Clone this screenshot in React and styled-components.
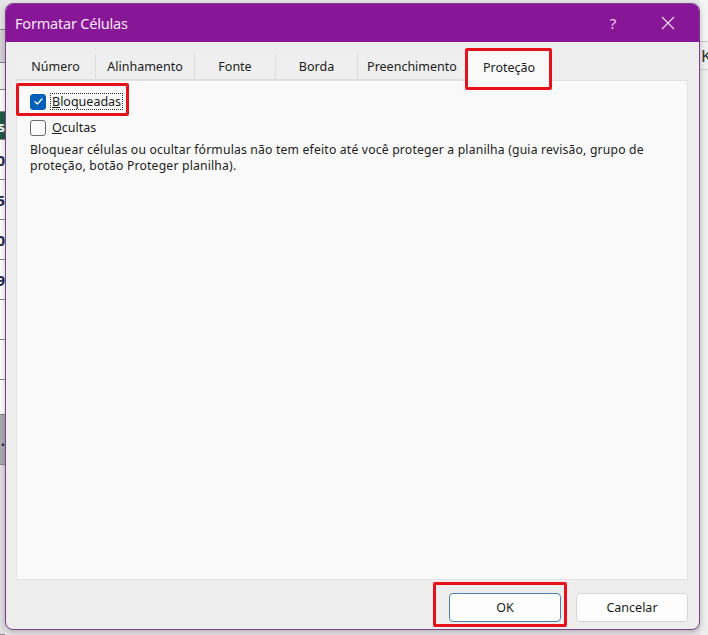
import React from 'react'
import styled, { createGlobalStyle } from 'styled-components'

const GlobalStyle = createGlobalStyle`
  html, body {
    margin: 0;
    padding: 0;
    background: #e9e7ea;
  }
  * { box-sizing: border-box; }
`

const sheetLeft = [
  { h: 30, bg: '#e6e4e7' },
  { h: 33, bg: '#d4d2d6' },
  { h: 27, bg: '#f4f4f4' },
  { h: 22, bg: '#ffffff' },
  { h: 28, bg: '#1e5b47', color: '#fff', text: 's' },
  { h: 40, bg: '#ffffff', text: '0(' },
  { h: 40, bg: '#ffffff', text: '5:' },
  { h: 40, bg: '#ffffff', text: '0{' },
  { h: 40, bg: '#ffffff', text: '9(' },
  { h: 40, bg: '#ffffff' },
  { h: 40, bg: '#ffffff' },
  { h: 35, bg: '#ffffff' },
  { h: 50, bg: '#aeaeb0', text: '.' },
  { h: 170, bg: '#e2e0e3' },
]

function App() {
  return (
    <>
      <GlobalStyle />
      <Desktop>
        <SheetStrip>
          {sheetLeft.map((c, i) => (
            <SheetCell key={i} $h={c.h} $bg={c.bg} $color={c.color}>
              {c.text}
            </SheetCell>
          ))}
        </SheetStrip>

        <Dialog>
          <TitleBar>
            <Title>Formatar Células</Title>
            <TitleButtons>
              <HelpButton>?</HelpButton>
              <CloseButton>
                <svg width="16" height="16" viewBox="0 0 16 16">
                  <path d="M2 2 L14 14 M14 2 L2 14" stroke="#f3dcf5" strokeWidth="1.2" fill="none" />
                </svg>
              </CloseButton>
            </TitleButtons>
          </TitleBar>

          <Body>
            <Tabs>
              <Tab $w={79}>Número</Tab>
              <Tab $w={99}>Alinhamento</Tab>
              <Tab $w={81}>Fonte</Tab>
              <Tab $w={82}>Borda</Tab>
              <Tab $w={109}>Preenchimento</Tab>
              <Tab $w={86} $active>
                Proteção
                <Mark $top={-2} $left={-2} $right={-1} $bottom={-9} />
              </Tab>
            </Tabs>

            <Panel>
              <CheckRow>
                <Box $checked>
                  <svg width="11" height="11" viewBox="0 0 11 11">
                    <path d="M2 5.8 L4.4 8 L9 3" stroke="#fff" strokeWidth="1.3" fill="none" strokeLinecap="round" strokeLinejoin="round" />
                  </svg>
                </Box>
                <Label $focused><u>B</u>loqueadas</Label>
                <Mark $top={-10} $left={-14} $width={113} $bottom={-6} />
              </CheckRow>
              <CheckRow>
                <Box />
                <Label><u>O</u>cultas</Label>
              </CheckRow>
              <Note>
                Bloquear células ou ocultar fórmulas não tem efeito até você proteger a planilha (guia revisão, grupo de
                proteção, botão Proteger planilha).
              </Note>
            </Panel>

            <Footer>
              <ButtonSlot>
                <Button $primary>OK</Button>
                <Mark $top={-11} $left={-16} $right={-6} $bottom={-5} />
              </ButtonSlot>
              <Button>Cancelar</Button>
            </Footer>
          </Body>
        </Dialog>

        <SideStrip>
          <SideTop />
          <SideCell>K</SideCell>
          <SideRest />
        </SideStrip>
      </Desktop>
    </>
  )
}

const Desktop = styled.div`
  display: grid;
  grid-template-columns: 5px 695px 8px;
  height: 635px;
  overflow: hidden;
  font-family: "Noto Sans", "Open Sans", sans-serif;
`

const SheetStrip = styled.div`
  display: flex;
  flex-direction: column;
  overflow: hidden;
`

const SheetCell = styled.div`
  height: ${p => p.$h}px;
  flex-shrink: 0;
  background: ${p => p.$bg};
  border-bottom: 1px solid #8a8a8a;
  color: ${p => p.$color || '#1c2a4a'};
  font-size: 15px;
  font-weight: 700;
  line-height: ${p => p.$h}px;
  direction: rtl;
  white-space: nowrap;
  overflow: hidden;
`

const Dialog = styled.div`
  position: relative;
  margin-top: 3px;
  height: 627px;
  display: flex;
  flex-direction: column;
  background: #eeeeee;
  border: 1px solid #7d3f8c;
  border-radius: 8px;
  overflow: hidden;
  box-shadow: 0 2px 6px rgba(0, 0, 0, 0.25);
`

const TitleBar = styled.div`
  height: 38px;
  flex-shrink: 0;
  display: flex;
  align-items: center;
  justify-content: space-between;
  background: #881798;
  padding-left: 9px;
`

const Title = styled.div`
  color: #f7e8f9;
  font-size: 14.5px;
  letter-spacing: -0.2px;
`

const TitleButtons = styled.div`
  display: flex;
  height: 100%;
`

const HelpButton = styled.div`
  width: 48px;
  display: flex;
  align-items: center;
  justify-content: center;
  color: #ecd0ef;
  font-size: 15px;
`

const CloseButton = styled(HelpButton)`
  width: 62px;
`

const Body = styled.div`
  flex: 1;
  display: flex;
  flex-direction: column;
  padding: 6px 11px 0 10px;
`

const Tabs = styled.div`
  display: flex;
  align-items: flex-end;
  height: 32px;
  flex-shrink: 0;
`

const Tab = styled.div`
  position: relative;
  width: ${p => p.$w}px;
  height: ${p => (p.$active ? 32 : 26)}px;
  display: flex;
  align-items: center;
  justify-content: center;
  padding-top: ${p => (p.$active ? 3 : 0)}px;
  font-size: 12.5px;
  color: #1b1b1b;
  background: ${p => (p.$active ? '#f9f9f9' : '#efefef')};
  border-left: 1px solid #dedede;
  border-top: ${p => (p.$active ? '1px solid #dedede' : 'none')};
  border-right: ${p => (p.$active ? '1px solid #dedede' : 'none')};
  border-bottom: ${p => (p.$active ? 'none' : '1px solid #dedede')};
  margin-bottom: ${p => (p.$active ? -1 : 0)}px;
  z-index: ${p => (p.$active ? 1 : 0)};

  &:first-child {
    border-left: none;
  }
`

const Mark = styled.div`
  position: absolute;
  top: ${p => p.$top}px;
  left: ${p => p.$left}px;
  ${p => (p.$width ? `width: ${p.$width}px;` : `right: ${p.$right}px;`)}
  bottom: ${p => p.$bottom}px;
  border: 3px solid #e5111b;
  border-radius: 2px;
  pointer-events: none;
  z-index: 5;
`

const Panel = styled.div`
  height: 500px;
  flex-shrink: 0;
  background: #f9f9f9;
  border: 1px solid #e2e2e2;
  padding: 12px 14px 0 13px;
  display: flex;
  flex-direction: column;
`

const CheckRow = styled.div`
  position: relative;
  display: flex;
  align-items: center;
  gap: 5px;
  height: 17px;
  margin-bottom: 9px;
`

const Box = styled.div`
  width: 16px;
  height: 16px;
  border-radius: 3px;
  display: flex;
  align-items: center;
  justify-content: center;
  background: ${p => (p.$checked ? '#005fb8' : '#fbfbfb')};
  border: 1px solid ${p => (p.$checked ? '#005fb8' : '#6a6a6a')};
`

const Label = styled.div`
  font-size: 12.5px;
  color: #1b1b1b;
  padding: 0 1px;
  line-height: 15px;
  outline: ${p => (p.$focused ? '1px dotted #333' : 'none')};
  u { text-decoration: underline; }
`

const Note = styled.p`
  margin: -3px 0 0;
  font-size: 12.2px;
  line-height: 16px;
  color: #1b1b1b;
  letter-spacing: 0.18px;
`

const Footer = styled.div`
  flex: 1;
  display: flex;
  justify-content: flex-end;
  align-items: flex-start;
  gap: 15px;
  padding-top: 13px;
`

const ButtonSlot = styled.div`
  position: relative;
`

const Button = styled.div`
  width: 112px;
  height: 29px;
  display: flex;
  align-items: center;
  justify-content: center;
  font-size: 12.5px;
  color: #1b1b1b;
  background: #fdfdfd;
  border: 1px solid ${p => (p.$primary ? '#4a7fa8' : '#d6d6d6')};
  border-radius: 4px;
`

const SideStrip = styled.div`
  display: flex;
  flex-direction: column;
  overflow: hidden;
  background: #f1f1f1;
`

const SideTop = styled.div`
  height: 42px;
  background: #f5f5f5;
  border-bottom: 1px solid #c9c9c9;
`

const SideCell = styled.div`
  height: 28px;
  padding-left: 1px;
  font-size: 17px;
  line-height: 28px;
  color: #333;
  border-bottom: 1px solid #cfcfcf;
  white-space: nowrap;
`

const SideRest = styled.div`
  flex: 1;
  background: #eeeeee;
`

export default App
